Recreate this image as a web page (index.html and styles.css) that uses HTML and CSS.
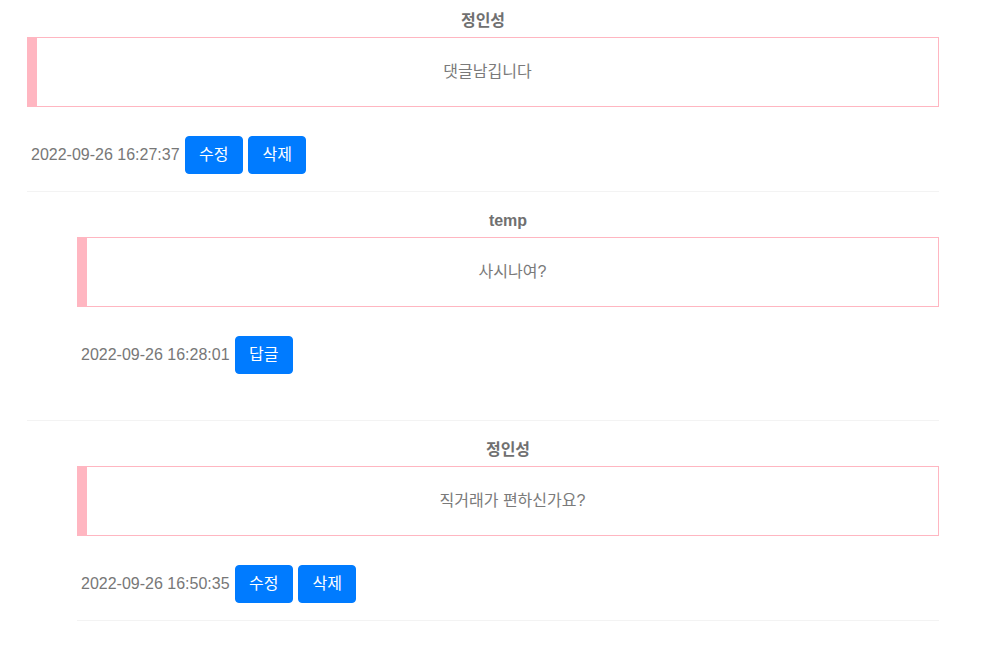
FILE: index.html
```html
<!DOCTYPE html>
<html lang="ko">
<head>
<meta charset="utf-8">
<title>댓글</title>
<link rel="stylesheet" href="styles.css">
</head>
<body>
<div class="page">
  <div class="comment">
    <div class="name">정인성</div>
    <div class="box">댓글남깁니다</div>
    <div class="meta">
      <span class="date">2022-09-26 16:27:37</span>
      <button class="btn">수정</button>
      <button class="btn">삭제</button>
    </div>
  </div>
  <hr class="sep">

  <div class="comment reply">
    <div class="name first">temp</div>
    <div class="box">사시나여?</div>
    <div class="meta">
      <span class="date">2022-09-26 16:28:01</span>
      <button class="btn">답글</button>
    </div>
  </div>
  <hr class="sep wide">

  <div class="comment reply">
    <div class="name first">정인성</div>
    <div class="box">직거래가 편하신가요?</div>
    <div class="meta">
      <span class="date">2022-09-26 16:50:35</span>
      <button class="btn">수정</button>
      <button class="btn">삭제</button>
    </div>
    <hr class="sep">
  </div>
</div>
</body>
</html>
```

FILE: styles.css
```css
html, body {
  margin: 0;
  padding: 0;
  background: #ffffff;
}

body {
  font-family: "Liberation Sans", "Noto Sans CJK KR", sans-serif;
  font-size: 16px;
  color: #777777;
}

.page {
  width: 912px;
  margin-left: 27px;
}

.comment {
  display: flex;
  flex-direction: column;
}

.reply {
  margin-left: 50px;
}

.name {
  margin-top: 9px;
  margin-bottom: 4px;
  line-height: 24px;
  text-align: center;
  font-weight: bold;
  color: #707070;
}

.name.first {
  margin-top: 17px;
}

.box {
  height: 68px;
  line-height: 68px;
  border: 1px solid #ffb6c1;
  border-left: 10px solid #ffb6c1;
  text-align: center;
  color: #7a7a7a;
}

.meta {
  display: flex;
  align-items: center;
  margin-top: 29px;
  padding-left: 4px;
}

.date {
  font-size: 16px;
  color: #777777;
}

.btn {
  margin-left: 5px;
  height: 38px;
  padding: 6px 13.5px;
  border: 1px solid #007bff;
  border-radius: 4px;
  background: #007bff;
  color: #ffffff;
  font-family: "Liberation Sans", "Noto Sans CJK KR", sans-serif;
  font-size: 16px;
  line-height: 24px;
}

.sep {
  margin: 17px 0 0 0;
  border: 0;
  border-top: 1px solid #f3f3f3;
  height: 0;
}

.sep.wide {
  margin-top: 46px;
}
```
